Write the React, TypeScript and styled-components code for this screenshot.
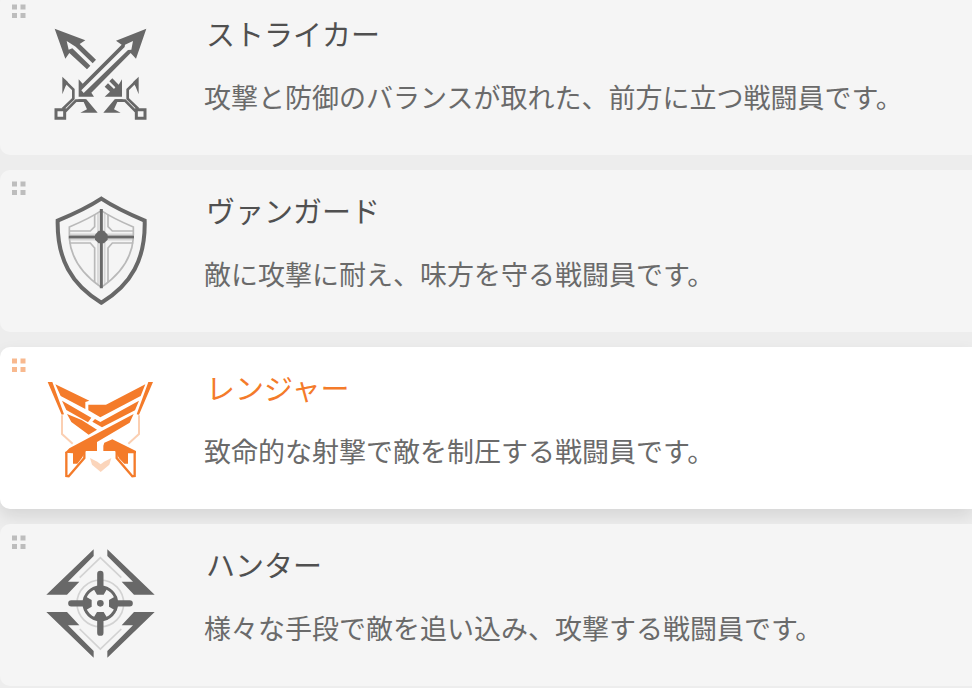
import React from "react";
import styled, { createGlobalStyle } from "styled-components";

const GlobalStyle = createGlobalStyle`
  body {
    margin: 0;
    background: #ededed;
    overflow: hidden;
    font-family: "Noto Sans CJK JP", "Noto Sans", sans-serif;
  }
`;

const RoleList = styled.ul`
  list-style: none;
  margin: -7px 0 0;
  padding: 0;
  display: flex;
  flex-direction: column;
  gap: 15px;
`;

const RoleCard = styled.li<{ $active: boolean }>`
  display: grid;
  grid-template-columns: 40px 120px 1fr;
  align-items: start;
  min-height: 162px;
  border-radius: 10px 0 0 10px;
  background: ${(p) => (p.$active ? "#ffffff" : "#f5f5f5")};
  box-shadow: ${(p) => (p.$active ? "0 7px 16px rgba(0, 0, 0, 0.1)" : "none")};
`;

const DragHandle = styled.button<{ $active: boolean }>`
  display: flex;
  padding: 11px 12px;
  border: 0;
  background: none;
  color: ${(p) => (p.$active ? "#f8b98f" : "#bdbdbd")};
  cursor: grab;
`;

const Emblem = styled.svg<{ $active: boolean }>`
  width: 120px;
  height: 120px;
  margin-top: 20px;
  color: ${(p) => (p.$active ? "#f47b2a" : "#686868")};
`;

const RoleText = styled.div`
  padding: 20px 0 0 44px;
`;

const RoleName = styled.h2<{ $active: boolean }>`
  margin: 0;
  padding-left: 2px;
  font-size: 29px;
  line-height: 40px;
  font-weight: 400;
  color: ${(p) => (p.$active ? "#f47b2a" : "#505050")};
`;

const RoleDescription = styled.p`
  margin: 24px 0 0;
  font-size: 27px;
  line-height: 40px;
  color: #6a6a6a;
  white-space: nowrap;
`;

const HandleDots = () => (
  <svg width="14" height="15" viewBox="0 0 14 15" fill="currentColor" aria-hidden="true">
    <path d="M0 .5h5v5H0zM8.500 .5h5v5h-5zM0 9h5v5H0zM8.500 9h5v5h-5z" />
  </svg>
);

type EmblemProps = { active: boolean };

const SwordHilt = () => (
  <>
    <g fill="none" stroke="currentColor" strokeWidth="8">
      <path d="M48 281H74V307H48Z" strokeWidth="9" />
      <path d="M68 279L100 248V221L72 193" />
      <path d="M76 286L108 254H137" />
    </g>
    <path d="M67 182L84 199L76 212L67 235ZM112 250H139L173 290H121L141 280L131 258Z" />
  </>
);

const StrikerEmblem = ({ active }: EmblemProps) => (
  <Emblem $active={active} viewBox="0 -9 360 360" fill="currentColor" aria-hidden="true">
    <path
      fillRule="evenodd"
      d="M44 38L136 73L119 84L168 131L158 142L107 92L80 75L86 101L97 97L151 149L141 160L88 111L76 128Z"
    />
    <path
      fillRule="evenodd"
      d="M319 38L288 128L272 111L154 230L162 242H116V190L128 203L245 86L228 74ZM279 75L255 86L254 93L124 223L131 231L264 102L274 101Z"
    />
    <path d="M217 187L236 206L246 190V242H194L210 227L194 212L204 202L222 219L226 214L208 196Z" />
    <SwordHilt />
    <g transform="translate(363 0) scale(-1 1)">
      <SwordHilt />
    </g>
  </Emblem>
);

const VanguardEmblem = ({ active }: EmblemProps) => (
  <Emblem $active={active} viewBox="0 0 360 360" fill="none" stroke="currentColor" aria-hidden="true">
    <path
      strokeWidth="12"
      d="M184 26C146 51 99 73 53 92C51 207 94 284 184 338C274 284 317 207 314 92C269 73 222 51 184 26Z"
    />
    <g strokeWidth="5" opacity=".42">
      <path d="M184 62C154 82 119 98 88 111V136M184 292C124 251 93 205 88 145M184 62C214 82 249 98 280 111V136M184 292C244 251 275 205 280 145" />
      <path d="M164 73V110L151 123H88M204 73V110L217 123H280M88 159H151L164 174V278M280 159H217L204 174V278" />
      <path d="M174 66V126M194 66V126M174 155V286M194 155V286M88 133H170M198 133H280M88 149H170M198 149H280" opacity=".5" />
    </g>
    <path strokeWidth="9" d="M184 57V295M86 141H282" />
    <path fill="currentColor" stroke="none" d="M176 122H192L203 134V149L192 160H176L165 149V134Z" />
  </Emblem>
);

const RangerEmblem = ({ active }: EmblemProps) => (
  <Emblem $active={active} viewBox="0 -9 360 360" fill="currentColor" aria-hidden="true">
    <path d="M23 36H37L72 133L65 134ZM339 36H325L290 133L297 134Z" />
    <path d="M46 43L148 92L136 96V117L62 78ZM316 43L302 78L181 142L145 121V104H198Z" />
    <path d="M66 92L154 143L144 157L79 120ZM297 92L285 121L186 172L157 155L165 147L181 156Z" />
    <path d="M81 132L125 150L171 179L146 194L94 156ZM281 132L269 158L171 216V243H137L127 262L112 281H99V250L75 248L88 235Z" />
    <path d="M193 218L217 208L288 243V250H264V281H253L237 265L226 243H190V227Z" />
    <g fill="none" stroke="currentColor" strokeWidth="7">
      <path d="M79 245V318L86 319L133 264V242M284 245V318L277 319L230 264V242" />
    </g>
    <g fill="none" stroke="currentColor" strokeWidth="6" opacity=".36">
      <path d="M66 136V192L98 221M297 136V192L265 221" />
    </g>
    <path opacity=".32" d="M150 264L172 275L182 283L192 275L214 264L208 284L182 306L156 284Z" />
  </Emblem>
);

const HunterEmblem = ({ active }: EmblemProps) => (
  <Emblem $active={active} viewBox="0 6 360 360" fill="none" stroke="currentColor" aria-hidden="true">
    <g fill="currentColor" stroke="none">
      <path d="M161 22V42L84 119H118L81 158H19ZM202 22V42L279 119H245L282 158H344Z" />
      <path d="M19 210H81L118 250H84L161 327V347ZM344 210H282L245 250H279L202 327V347Z" />
    </g>
    <g strokeWidth="5" opacity=".24">
      <path d="M119 107L181 47L244 107M119 261L181 321L244 261" />
      <circle cx="181" cy="184" r="70" />
    </g>
    <circle cx="181" cy="184" r="49" strokeWidth="9" />
    <path strokeWidth="19" strokeLinecap="round" d="M181 96V145M181 223V272M94 184H142M220 184H269" />
    <path
      fill="currentColor"
      stroke="none"
      d="M158 136H204L191 158H171ZM158 232H204L191 210H171ZM133 161V207L155 194V174ZM229 161V207L207 194V174Z"
    />
    <circle cx="181" cy="184" r="10" fill="currentColor" stroke="none" />
  </Emblem>
);

const roles = [
  {
    name: "ストライカー",
    description: "攻撃と防御のバランスが取れた、前方に立つ戦闘員です。",
    Icon: StrikerEmblem,
    active: false,
  },
  {
    name: "ヴァンガード",
    description: "敵に攻撃に耐え、味方を守る戦闘員です。",
    Icon: VanguardEmblem,
    active: false,
  },
  {
    name: "レンジャー",
    description: "致命的な射撃で敵を制圧する戦闘員です。",
    Icon: RangerEmblem,
    active: true,
  },
  {
    name: "ハンター",
    description: "様々な手段で敵を追い込み、攻撃する戦闘員です。",
    Icon: HunterEmblem,
    active: false,
  },
];

export default function App() {
  return (
    <>
      <GlobalStyle />
      <RoleList lang="ja">
        {roles.map(({ name, description, Icon, active }) => (
          <RoleCard key={name} $active={active} aria-current={active}>
            <DragHandle type="button" $active={active} aria-label={name}>
              <HandleDots />
            </DragHandle>
            <Icon active={active} />
            <RoleText>
              <RoleName $active={active}>{name}</RoleName>
              <RoleDescription>{description}</RoleDescription>
            </RoleText>
          </RoleCard>
        ))}
      </RoleList>
    </>
  );
}
